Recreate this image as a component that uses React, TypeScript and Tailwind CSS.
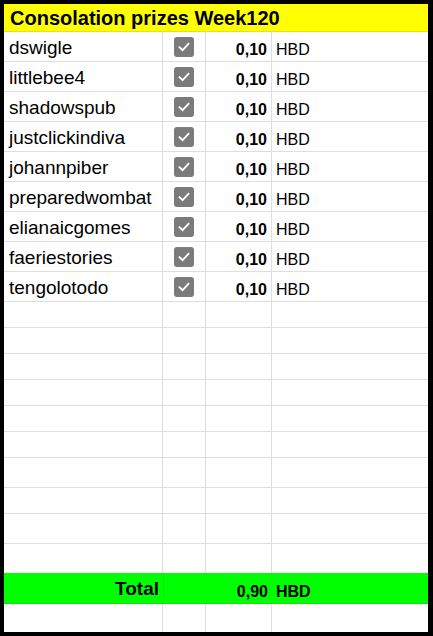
import React from 'react';

const names = [
  'dswigle',
  'littlebee4',
  'shadowspub',
  'justclickindiva',
  'johannpiber',
  'preparedwombat',
  'elianaicgomes',
  'faeriestories',
  'tengolotodo',
];

// heights of the empty rows between the list and the total
const emptyRows = [26, 26, 26, 26, 26, 26, 30, 26, 30, 29];

function Check() {
  return (
    <div className="w-[20px] h-[20px] rounded-[3px] bg-[#7b7b7b] flex items-center justify-center">
      <svg width="14" height="14" viewBox="0 0 14 14" fill="none">
        <path d="M2.5 7.2 L5.6 10.2 L11.5 3.8" stroke="#ffffff" strokeWidth="1.8" strokeLinecap="square" />
      </svg>
    </div>
  );
}

function Row({ h, children, last }: { h: number; children?: React.ReactNode[]; last?: boolean }) {
  const cells = children ?? [null, null, null, null];
  return (
    <div className={`flex ${last ? '' : 'border-b border-[#dedede]'}`} style={{ height: h }}>
      <div className="w-[159px] shrink-0 border-r border-[#dedede] flex items-end">{cells[0]}</div>
      <div className="w-[43px] shrink-0 border-r border-[#dedede] flex items-center justify-center">{cells[1]}</div>
      <div className="w-[66px] shrink-0 border-r border-[#dedede] flex items-end justify-end">{cells[2]}</div>
      <div className="flex-1 flex items-end">{cells[3]}</div>
    </div>
  );
}

export default function App() {
  return (
    <div className="w-[433px] h-[636px] bg-black pt-[4px] pl-[4px] pr-[5px] pb-[4px] font-[family-name:'Liberation_Sans',Arial,sans-serif] text-black">
      <div className="w-full h-full bg-white flex flex-col">
        <div className="h-[28px] bg-[#ffff00] border-b border-[#e6e600] flex items-center pl-[6px] text-[20px] font-bold leading-none">
          Consolation prizes Week120
        </div>
        {names.map((n) => (
          <Row key={n} h={30}>
            {[
              <span key="a" className="pl-[5px] pb-[4px] text-[19px] leading-none">{n}</span>,
              <Check key="b" />,
              <span key="c" className="pr-[4px] pb-[3px] text-[16px] font-bold leading-none">0,10</span>,
              <span key="d" className="pl-[4px] pb-[3px] text-[16px] leading-none">HBD</span>,
            ]}
          </Row>
        ))}
        {emptyRows.map((h, i) => (
          <Row key={i} h={h} last={i === emptyRows.length - 1} />
        ))}
        <div className="h-[31px] bg-[#00ff00] flex border-b border-[#10e010]">
          <div className="w-[159px] shrink-0 flex items-end justify-end pr-[4px] pb-[5px] text-[19px] font-bold leading-none">Total</div>
          <div className="w-[43px] shrink-0 border-l border-[#14e814]" />
          <div className="w-[66px] shrink-0 flex items-end justify-end pr-[4px] pb-[3px] text-[16px] font-bold leading-none">0,90</div>
          <div className="flex-1 flex items-end pl-[4px] pb-[3px] text-[16px] font-bold leading-none">HBD</div>
        </div>
        <Row h={28} last />
      </div>
    </div>
  );
}
